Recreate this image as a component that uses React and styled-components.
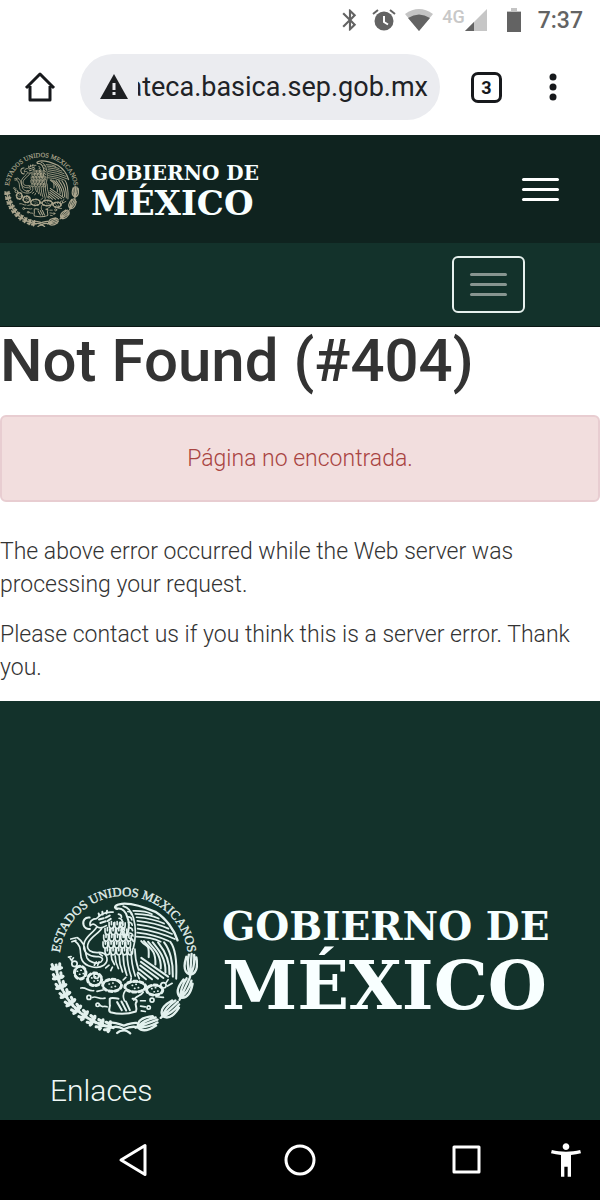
import React, { useId, useState } from "react";
import styled, { createGlobalStyle } from "styled-components";
import { MdAccessibilityNew, MdBluetooth } from "react-icons/md";

const polar = (r, deg) => {
  const a = (deg * Math.PI) / 180;
  return [278 + r * Math.cos(a), 272 + r * Math.sin(a)];
};

// rows of breast feathers: x, y, count
const breastRows = [
  [240, 158, 3],
  [228, 176, 4],
  [224, 196, 5],
  [222, 216, 5],
  [228, 236, 5],
];

// upper wing feathers: start x, y, tip x, y
const upperFeathers = [
  [306, 124, 362, 134],
  [312, 133, 382, 147],
  [316, 143, 398, 162],
  [318, 154, 411, 177],
  [319, 165, 422, 193],
  [319, 177, 430, 208],
  [318, 189, 412, 214],
  [316, 201, 388, 216],
];

// lower wing feathers, hanging behind the body
const lowerFeathers = [
  [330, 214, 352, 262],
  [338, 214, 372, 284],
  [350, 216, 388, 296],
  [364, 218, 402, 308],
  [380, 218, 414, 312],
  [398, 218, 424, 320],
  [416, 216, 434, 326],
];

const bellyFeathers = [
  [240, 254, 250, 284],
  [252, 258, 262, 296],
  [264, 258, 274, 306],
  [276, 256, 287, 316],
  [288, 252, 300, 320],
  [300, 246, 312, 318],
  [311, 238, 322, 300],
];

const tailFeathers = [
  [330, 264, 410, 320],
  [329, 276, 396, 324],
  [327, 287, 380, 326],
  [324, 298, 362, 328],
  [320, 308, 344, 328],
];

const cactusPads = [
  [148, 308, 17, 19],
  [191, 328, 21, 19],
  [243, 346, 28, 18],
  [312, 350, 31, 16],
  [370, 360, 24, 15],
];

const oakAngles = [174, 166, 158, 150, 142, 134, 126, 118, 110, 103];
const laurelAngles = [4, 25, 47, 70];

function Seal() {
  const arcId = useId();

  return (
    <SealSvg viewBox="58 44 441 451" role="img" aria-label="Escudo Nacional">
      <path id={arcId} d="M86 272 A192 192 0 1 1 470 272" fill="none" />
      <SealText>
        <textPath href={`#${arcId}`} startOffset="50%" textAnchor="middle">
          ESTADOS UNIDOS MEXICANOS
        </textPath>
      </SealText>

      <g
        fill="none"
        stroke="currentColor"
        strokeWidth="5"
        strokeLinecap="round"
        strokeLinejoin="round"
      >
        {/* head and beak */}
        <path d="M246 128 C225 126 208 134 197 147 C184 147 174 156 178 168 C184 162 190 163 195 168 C202 178 216 174 226 168" />
        <path
          strokeWidth="6"
          d="M176 144 C163 142 154 153 158 166 C160 174 168 180 177 178"
        />
        <path
          strokeWidth="6"
          d="M204 150 l14 -4 M208 160 l16 -5 M205 139 l-2 -7 M215 135 l-1 -8 M226 132 l2 -8 M224 144 l12 -6 M230 154 l9 -6"
        />

        {/* wing */}
        <path
          strokeWidth="7"
          d="M258 118 C246 114 252 106 272 103 C304 100 342 114 374 128 C403 146 428 180 438 212"
        />
        <path
          strokeWidth="6"
          d="M256 118 C274 114 284 128 288 142 C296 160 294 178 288 196"
        />
        <path d="M276 110 C292 114 302 128 307 146 C314 172 316 198 306 236" />
        {[0, 1, 2, 3, 4, 5].map((i) => (
          <path
            key={i}
            d={`M${290 + i} ${126 + i * 16} q10 0 11 9 M${262 + i * 2} ${134 + i * 12} q9 1 9 9`}
          />
        ))}
        {upperFeathers.map(([x, y, tx, ty]) => (
          <path
            key={y}
            d={`M${x} ${y} Q${(x + tx) / 2 + 8} ${(y + ty) / 2 - 6} ${tx} ${ty}`}
          />
        ))}
        {lowerFeathers.map(([x, y, tx, ty]) => (
          <path
            key={x}
            strokeWidth="6"
            d={`M${x} ${y} C${x + 16} ${y + 20} ${tx + 2} ${ty - 44} ${tx} ${ty}`}
          />
        ))}

        {/* body */}
        {breastRows.map(([x, y, count]) =>
          Array.from({ length: count }, (_, i) => (
            <path
              key={`${y}${i}`}
              d={`M${x + i * 17 - 6} ${y} v10 q1 9 7 9 q7 0 7 -9 v-8 M${x + i * 17 + 1} ${y - 2} v9`}
            />
          ))
        )}
        {bellyFeathers.map(([x, y, tx, ty]) => (
          <path key={x} d={`M${x} ${y} Q${x} ${(y + ty) / 2} ${tx} ${ty}`} />
        ))}
        {tailFeathers.map(([x, y, tx, ty]) => (
          <path key={x} strokeWidth="6" d={`M${x} ${y} L${tx} ${ty}`} />
        ))}
        <path d="M234 286 l-10 8 M244 292 l-5 10 M284 322 l-8 8 M300 324 l-2 10 M318 312 l6 14" />

        {/* snake */}
        <path d="M212 176 C206 188 182 200 174 216 C160 243 184 250 206 248 C231 250 234 274 218 286 C198 299 164 290 154 272 C143 254 158 232 132 214" />
        <path d="M196 174 C190 186 168 198 161 216 C150 250 178 262 202 260 C216 262 218 270 210 276 C198 284 176 278 168 264 C160 242 166 222 140 204" />
        <path d="M120 208 l16 -4 M123 216 l12 -4 M190 286 l6 -10 M200 286 l4 -10 M206 252 l8 6" />

        {/* nopal */}
        {cactusPads.map(([x, y, rx, ry]) => (
          <g key={x}>
            <ellipse
              cx={x}
              cy={y}
              rx={rx}
              ry={ry}
              strokeWidth="9"
              strokeDasharray="9 9"
            />
            <ellipse cx={x} cy={y} rx={rx - 1} ry={ry - 1} />
            <path
              d={`M${x - 9} ${y - 4} h1 M${x + 2} ${y - 7} h1 M${x + 9} ${y + 3} h1 M${x - 2} ${y + 5} h1`}
            />
          </g>
        ))}
        <circle cx="131" cy="282" r="8" />
        <circle cx="196" cy="318" r="7" />
        <circle cx="396" cy="346" r="8" />
        <path d="M118 266 l7 9 M113 262 l8 -2 M122 272 l6 -8 M408 348 l14 -8 M404 338 l6 -9 M282 362 C274 374 276 384 280 392 M336 366 C330 378 312 376 308 390" />
        <path
          strokeWidth="6"
          d="M236 386 C242 380 254 386 262 386 M304 386 C314 384 320 392 314 398 C310 406 320 414 314 424 C290 432 260 432 238 426 C228 420 240 410 236 402 V386"
        />
        <path
          strokeWidth="6"
          d="M258 396 l14 24 M271 394 l14 27 M284 394 l12 26"
        />
        <path d="M150 354 C166 350 170 364 188 362 M198 364 l18 -4 M184 382 C196 376 206 390 222 384 M206 404 C212 414 218 406 228 410 M328 392 h14 M328 408 l14 2 M330 422 l12 2 M374 380 l22 2" />
        <circle cx="174" cy="382" r="6" />
        <circle cx="200" cy="404" r="5" />
        <circle cx="362" cy="390" r="6" />
        <circle cx="352" cy="412" r="5" />

        {/* oak branch */}
        <g strokeWidth="9">
          {oakAngles.map((deg) => {
            const [x, y] = polar(202, deg);
            return (
              <path
                key={deg}
                transform={`translate(${x} ${y}) rotate(${deg + 90})`}
                d="M-14 0 H8 M-6 2 L3 10 L10 11 M-6 -2 L3 -10 L10 -12 M-4 10 L-2 15 M-4 -10 L-2 -15"
              />
            );
          })}
        </g>

        {/* laurel branch */}
        {laurelAngles.map((deg) => {
          const [x, y] = polar(200, deg);
          return (
            <g
              key={deg}
              strokeWidth="7"
              transform={`translate(${x} ${y}) rotate(${deg - 90})`}
            >
              <path d="M-28 -2 C-22 -19 0 -21 24 -15 M-26 -1 C-10 -11 8 -11 31 -8 M-36 0 H34 M-26 1 C-10 11 8 11 31 8 M-28 2 C-22 19 0 21 24 15" />
            </g>
          );
        })}

        {/* ribbon */}
        <path
          strokeWidth="7"
          d="M236 458 C252 454 264 462 278 466 C292 462 302 456 316 458 M244 471 C260 466 270 472 278 477 C288 472 302 466 320 471 M258 488 C264 482 272 480 279 480 C288 480 292 485 297 489"
        />
      </g>
    </SealSvg>
  );
}

function Logo({ small }) {
  return (
    <LogoRow $small={small}>
      <SealBox $small={small}>
        <Seal />
      </SealBox>
      <Wordmark>
        <LogoTop $small={small}>GOBIERNO DE</LogoTop>
        <LogoBottom $small={small}>MÉXICO</LogoBottom>
      </Wordmark>
    </LogoRow>
  );
}

export default function App() {
  const [url, setUrl] = useState("ateca.basica.sep.gob.mx");

  const handleUrlChange = (e) => {
    setUrl(e.target.value);
  };

  return (
    <Screen>
      <GlobalStyle />

      <StatusBar>
        <MdBluetooth size={26} />
        <svg width="24" height="24" viewBox="0 0 24 24">
          <circle cx="12" cy="13" r="9.5" fill="currentColor" />
          <path d="M12 8v6l4 2.500" fill="none" stroke="#fff" strokeWidth="2" />
          <path d="M1 6 6 2M23 6 18 2" stroke="currentColor" strokeWidth="2" />
        </svg>
        <svg width="28" height="24" viewBox="0 0 28 24">
          <path d="M0 6Q14 -4 28 6L14 23Z" fill="#c4c4c4" />
          <path d="M3 10Q14 3 25 10L14 23Z" fill="currentColor" />
        </svg>
        <Network>
          <span>4G</span>
          <svg width="22" height="22" viewBox="0 0 22 22">
            <path d="M0 22 22 0V22Z" fill="#c6c6c6" />
            <path d="M0 22 9 13V22Z" fill="currentColor" />
          </svg>
        </Network>
        <Battery width="16" height="24" viewBox="0 0 16 24">
          <path d="M5 0h6v3h4v3H1V3h4Z" fill="#c4c4c4" />
          <path d="M1 4h14v20H1Z" fill="currentColor" />
        </Battery>
        <Clock>7:37</Clock>
      </StatusBar>

      <Toolbar>
        <IconButton aria-label="Inicio">
          <svg
            width="32"
            height="32"
            viewBox="0 0 32 32"
            fill="none"
            stroke="currentColor"
            strokeWidth="3"
          >
            <path d="M2 17 16 3 30 17M6 15V29H26V15" strokeLinejoin="round" />
          </svg>
        </IconButton>
        <Omnibox>
          <svg width="28" height="26" viewBox="0 0 28 26">
            <path d="M14 0 28 25H0Z" fill="#1d1f22" />
            <path d="M14 9v7M14 18v3" stroke="#ebecf0" strokeWidth="3" />
          </svg>
          <UrlClip>
            <UrlInput
              type="text"
              aria-label="Dirección web"
              value={url}
              onChange={handleUrlChange}
            />
          </UrlClip>
        </Omnibox>
        <TabButton aria-label="3 pestañas">3</TabButton>
        <IconButton aria-label="Más opciones">
          <svg width="32" height="32" viewBox="0 0 32 32" fill="currentColor">
            <circle cx="16" cy="6" r="3.500" />
            <circle cx="16" cy="16" r="3.500" />
            <circle cx="16" cy="26" r="3.500" />
          </svg>
        </IconButton>
      </Toolbar>

      <Header>
        <Logo small />
        <MenuButton aria-label="Menú">
          <Bar />
          <Bar />
          <Bar />
        </MenuButton>
      </Header>

      <SubNav>
        <MenuButton $outlined aria-label="Menú del sitio">
          <Bar $muted />
          <Bar $muted />
          <Bar $muted />
        </MenuButton>
      </SubNav>

      <Main>
        <Title>Not Found (#404)</Title>
        <Alert role="alert">Página no encontrada.</Alert>
        <Text>
          The above error occurred while the Web server was processing your
          request.
        </Text>
        <Text>
          Please contact us if you think this is a server error. Thank you.
        </Text>
      </Main>

      <Footer>
        <Logo />
        <FooterTitle>Enlaces</FooterTitle>
      </Footer>

      <NavBar>
        <NavButton aria-label="Atrás">
          <svg
            width="36"
            height="36"
            viewBox="0 0 36 36"
            fill="none"
            stroke="currentColor"
            strokeWidth="3"
          >
            <path d="M30 3.500V32.500L6 18Z" strokeLinejoin="round" />
          </svg>
        </NavButton>
        <NavButton aria-label="Pantalla principal">
          <svg
            width="36"
            height="36"
            viewBox="0 0 36 36"
            fill="none"
            stroke="currentColor"
            strokeWidth="3"
          >
            <circle cx="18" cy="18" r="14" />
          </svg>
        </NavButton>
        <NavButton aria-label="Recientes">
          <svg
            width="36"
            height="36"
            viewBox="0 0 36 36"
            fill="none"
            stroke="currentColor"
            strokeWidth="3"
          >
            <path d="M5 5H30V30H5Z" strokeLinejoin="round" />
          </svg>
        </NavButton>
        <NavButton aria-label="Accesibilidad">
          <MdAccessibilityNew size={40} />
        </NavButton>
      </NavBar>
    </Screen>
  );
}

const GlobalStyle = createGlobalStyle`
  * {
    box-sizing: border-box;
  }

  body {
    margin: 0;
    background: #fff;
    font-family: Roboto, "Liberation Sans", sans-serif;
  }

  button {
    padding: 0;
    border: none;
    background: none;
    color: inherit;
    font-family: inherit;
    cursor: pointer;
  }

  svg {
    display: block;
    flex-shrink: 0;
  }
`;

const Screen = styled.div`
  display: flex;
  flex-direction: column;
  min-height: 100vh;
`;

const StatusBar = styled.div`
  display: flex;
  align-items: center;
  justify-content: flex-end;
  gap: 9px;
  height: 40px;
  padding-right: 17px;
  color: #636363;
`;

const Network = styled.div`
  display: flex;
  align-items: center;

  span {
    align-self: flex-start;
    color: #c8c8c8;
    font-size: 18px;
    font-weight: 500;
    line-height: 16px;
  }
`;

const Battery = styled.svg`
  margin: 0 7px 0 10px;
`;

const Clock = styled.span`
  font-size: 23px;
  font-weight: 500;
`;

const Toolbar = styled.div`
  display: flex;
  align-items: center;
  padding: 14px 31px 15px 24px;
  color: #17191c;
`;

const IconButton = styled.button`
  width: 32px;
  height: 32px;
`;

const Omnibox = styled.div`
  display: flex;
  flex: 1;
  align-items: center;
  gap: 10px;
  min-width: 0;
  height: 66px;
  margin: 0 31px 0 24px;
  padding: 0 12px 0 20px;
  border-radius: 33px;
  background: #ebecf0;
`;

const UrlClip = styled.div`
  display: flex;
  flex: 1;
  justify-content: flex-end;
  min-width: 0;
  overflow: hidden;
`;

const UrlInput = styled.input`
  flex: none;
  width: 320px;
  padding: 0;
  border: none;
  outline: none;
  background: none;
  color: #202226;
  font-family: inherit;
  font-size: 27px;
  text-align: right;
`;

const TabButton = styled.button`
  width: 31px;
  height: 31px;
  margin-right: 35px;

  && {
    border: 3px solid #17191c;
    border-radius: 7px;
    font-size: 18px;
    font-weight: 700;
  }
`;

const Header = styled.header`
  display: flex;
  align-items: center;
  justify-content: space-between;
  height: 108px;
  padding: 0 41px 0 4px;
  background: #0f231f;
`;

const SubNav = styled.nav`
  display: flex;
  align-items: center;
  justify-content: flex-end;
  height: 84px;
  padding-right: 75px;
  border-bottom: 1px solid #0a1714;
  background: #13322b;
`;

const MenuButton = styled.button`
  display: flex;
  flex-direction: column;
  align-items: center;
  justify-content: center;
  gap: 7px;

  && {
    width: ${(props) => (props.$outlined ? "73px" : "38px")};
    height: 57px;
    border: ${(props) => (props.$outlined ? "2px solid #e6f0ed" : "none")};
    border-radius: 6px;
  }
`;

const Bar = styled.span`
  width: 37px;
  height: 3px;
  border-radius: 2px;
  background: ${(props) => (props.$muted ? "#879590" : "#fff")};
`;

const LogoRow = styled.div`
  display: flex;
  align-items: center;
  gap: ${(props) => (props.$small ? "12px" : "24px")};
  color: #f8ffff;
`;

const SealBox = styled.div`
  flex-shrink: 0;
  width: ${(props) => (props.$small ? "75px" : "148px")};
  color: ${(props) => (props.$small ? "#aca68e" : "#e3f1ee")};
`;

const SealSvg = styled.svg`
  width: 100%;
`;

const SealText = styled.text`
  fill: currentColor;
  stroke: currentColor;
  stroke-width: 1;
  font-family: "Liberation Serif", serif;
  font-size: 38px;
`;

const Wordmark = styled.div`
  display: flex;
  flex-direction: column;
  padding-top: 3px;
  font-family: "DejaVu Serif", serif;
  font-weight: 700;
  white-space: nowrap;
`;

const LogoTop = styled.span`
  font-size: ${(props) => (props.$small ? "20px" : "39px")};
  line-height: ${(props) => (props.$small ? "24px" : "48px")};
`;

const LogoBottom = styled.span`
  font-size: ${(props) => (props.$small ? "34px" : "68px")};
  line-height: ${(props) => (props.$small ? "36px" : "70px")};
`;

const Main = styled.main`
  color: #333;
`;

const Title = styled.h1`
  margin: 0 0 21px;
  font-size: 60px;
  font-weight: 500;
  line-height: 67px;
`;

const Alert = styled.div`
  margin-bottom: 33px;
  padding: 25px;
  border: 2px solid #e8cdd1;
  border-radius: 6px;
  background: #f2dede;
  color: #a94442;
  font-size: 23px;
  font-weight: 300;
  line-height: 33px;
  text-align: center;
`;

const Text = styled.p`
  margin: 0 0 17px;
  font-size: 23px;
  font-weight: 300;
  line-height: 33px;
`;

const Footer = styled.footer`
  flex: 1;
  padding: 183px 50px 0;
  background: #13322b;
`;

const FooterTitle = styled.h2`
  margin: 36px 0 0;
  color: #f0f8f6;
  font-size: 30px;
  font-weight: 300;
  line-height: 40px;
`;

const NavBar = styled.nav`
  display: grid;
  grid-template-columns: repeat(3, 10fr) 3fr;
  align-items: center;
  justify-items: center;
  height: 80px;
  padding-left: 50px;
  background: #000;
`;

const NavButton = styled.button`
  && {
    color: #fff;
  }

  &:last-child {
    justify-self: start;
    margin-left: -4px;
  }
`;
